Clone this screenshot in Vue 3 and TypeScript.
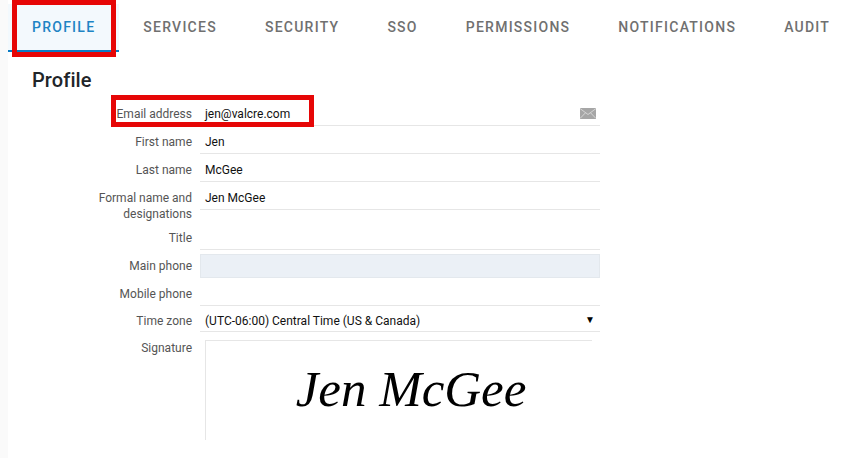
<script setup lang="ts">
interface Row { label: string; value: string; kind?: string }
const tabs: string[] = ['Profile', 'Services', 'Security', 'SSO', 'Permissions', 'Notifications', 'Audit']
const rows: Row[] = [
  { label: 'Email address', value: 'jen@valcre.com', kind: 'email' },
  { label: 'First name', value: 'Jen' },
  { label: 'Last name', value: 'McGee' },
  { label: 'Formal name and designations', value: 'Jen McGee', kind: 'tall' },
  { label: 'Title', value: '' },
  { label: 'Main phone', value: '', kind: 'filled' },
  { label: 'Mobile phone', value: '' },
  { label: 'Time zone', value: '(UTC-06:00) Central Time (US & Canada)', kind: 'select' },
]
</script>

<template>
  <div class="page">
    <nav class="tabs">
      <div v-for="(t, i) in tabs" :key="t" class="tab" :class="{ active: i === 0 }">{{ t }}</div>
    </nav>
    <main class="content">
      <h1 class="title">Profile</h1>
      <div class="form">
        <div v-for="r in rows" :key="r.label" class="row" :class="r.kind">
          <label class="label">{{ r.label }}</label>
          <div class="field">
            <span class="value">{{ r.value }}</span>
            <svg v-if="r.kind === 'email'" class="mail" width="16" height="11" viewBox="0 0 16 11">
              <rect width="16" height="11" fill="#a6a6a6" />
              <path d="M0 .5 8 6.5 16 .5M0 10.5 5.6 4.7M16 10.5 10.4 4.7" fill="none" stroke="#d4d4d4" stroke-width="1" />
            </svg>
            <span v-if="r.kind === 'select'" class="arrow">▼</span>
          </div>
        </div>
        <div class="row sig">
          <label class="label">Signature</label>
          <div class="sigbox"><span class="sigtext">Jen McGee</span></div>
        </div>
      </div>
    </main>
    <div class="mark mark-tab"></div>
    <div class="mark mark-email"></div>
  </div>
</template>

<style>
html, body { margin: 0; background: #fff; }
</style>

<style scoped>
.page {
  position: relative;
  width: 859px;
  height: 458px;
  overflow: hidden;
  box-sizing: border-box;
  padding-left: 8px;
  background: #fff;
  font-family: Roboto, "Liberation Sans", sans-serif;
  color: #212529;
}
.page::before {
  content: "";
  position: absolute;
  left: 0;
  top: 0;
  bottom: 0;
  width: 8px;
  background: #fafafa;
}
.tabs {
  display: flex;
  height: 52px;
  padding-top: 4px;
  box-sizing: border-box;
}
.tab {
  padding: 0 24px;
  line-height: 46px;
  height: 48px;
  box-sizing: border-box;
  font-size: 14px;
  font-weight: 500;
  letter-spacing: 1.25px;
  text-transform: uppercase;
  color: #707070;
}
.tab.active {
  color: #1e84c4;
  background: #f3f9fd;
  border-bottom: 2px solid #0a7cc4;
}
.title {
  margin: 16px 0 0 24px;
  font-size: 20px;
  line-height: 24px;
  font-weight: 500;
  letter-spacing: 0.1px;
  color: #212529;
}
.form {
  margin-top: 8px;
  display: flex;
  flex-direction: column;
  font-size: 12px;
}
.row {
  display: grid;
  grid-template-columns: 184px 400px;
  column-gap: 8px;
  margin-bottom: 2px;
}
.label {
  text-align: right;
  line-height: 16px;
  padding: 6px 0 0 84px;
  color: #555;
}
.field {
  position: relative;
  height: 26px;
  box-sizing: border-box;
  padding: 6px 5px 0;
  line-height: 16px;
  border-bottom: 1px solid #e6e6e6;
  color: #111;
}
.tall { margin-bottom: 14px; }
.tall .label { height: 26px; box-sizing: border-box; }
.filled { margin-top: 2px; }
.filled .field {
  height: 24px;
  padding-top: 4px;
  background: #ebf0f6;
  border: 1px solid #e3e8ed;
}
.filled .label { padding-top: 4px; }
.mail {
  position: absolute;
  right: 4px;
  top: 8px;
}
.arrow {
  position: absolute;
  right: 5px;
  top: 6px;
  font-size: 10px;
  color: #000;
}
.select { margin-bottom: 8px; margin-top: -2px; }
.select .label, .select .field { padding-top: 7px; }
.sig .label { padding-top: 0; }
.sigbox {
  margin-left: 5px;
  width: 387px;
  height: 100px;
  box-sizing: border-box;
  border-top: 1px solid #e6e6e6;
  border-left: 1px solid #e6e6e6;
  display: flex;
  justify-content: center;
  padding-top: 18px;
}
.sigtext {
  font-family: "Liberation Serif", serif;
  font-style: italic;
  font-size: 51px;
  line-height: 60px;
  color: #000;
  margin-left: 24px;
}
.mark {
  position: absolute;
  box-sizing: border-box;
  border: 5px solid #e60606;
}
.mark-tab { left: 12px; top: 0; width: 104px; height: 57px; }
.mark-email { left: 111px; top: 95px; width: 203px; height: 32px; }
</style>
